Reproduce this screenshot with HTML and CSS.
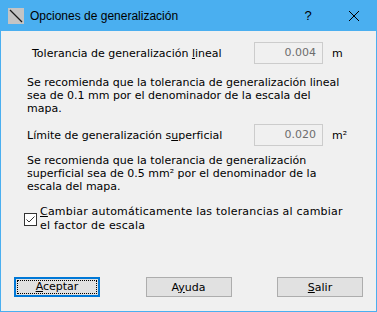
FILE: index.html
```html
<!DOCTYPE html>
<html lang="es">
<head>
    <meta charset="UTF-8">
    <title>Opciones de generalización</title>
    <link rel="stylesheet" href="styles.css">
</head>
<body>

    <div class="window">
        <!-- Title bar -->
        <div class="titlebar">
            <svg class="app-icon" width="16" height="16" viewBox="0 0 16 16">
                <rect x="0" y="0" width="16" height="16" fill="#c4c4c4"/>
                <line x1="2" y1="2" x2="14" y2="14" stroke="#1a1a1a" stroke-width="1.2"/>
            </svg>
            <span class="title">Opciones de generalización</span>
            <div class="caption-btn">?</div>
            <div class="caption-btn">
                <svg width="10" height="10" viewBox="0 0 10 10">
                    <path d="M0 0 L10 10 M10 0 L0 10" stroke="#000" stroke-width="1"/>
                </svg>
            </div>
        </div>

        <div class="client">
            <div class="field-row first">
                <label class="field-label indent">Tolerancia de generalización <u>l</u>ineal</label>
                <div class="textbox">0.004</div>
                <span class="unit">m</span>
            </div>
            <p class="note">Se recomienda que la tolerancia de generalización lineal<br>sea de 0.1 mm por el denominador de la escala del<br>mapa.</p>

            <div class="field-row second">
                <label class="field-label">Límite de generalización s<u>u</u>perficial</label>
                <div class="textbox">0.020</div>
                <span class="unit">m²</span>
            </div>
            <p class="note">Se recomienda que la tolerancia de generalización<br>superficial sea de 0.5 mm² por el denominador de la<br>escala del mapa.</p>

            <div class="check-row">
                <span class="checkbox">
                    <svg width="11" height="11" viewBox="0 0 11 11">
                        <path d="M1.5 5.5 L4 8 L9.5 2.5" fill="none" stroke="#333" stroke-width="1"/>
                    </svg>
                </span>
                <span class="check-text"><u>C</u>ambiar automáticamente las tolerancias al cambiar<br>el factor de escala</span>
            </div>

            <div class="buttons">
                <button class="btn default"><span class="focus"><u>A</u>ceptar</span></button>
                <button class="btn">A<u>y</u>uda</button>
                <button class="btn"><u>S</u>alir</button>
            </div>
        </div>
    </div>

</body>
</html>
```

FILE: styles.css
```css
body {
    margin: 0;
    font-family: "DejaVu Sans", Verdana, sans-serif;
    font-size: 11px;
    color: #000;
}
.window {
    width: 377px;
    height: 312px;
    box-sizing: border-box;
    border: 1px solid #4aaff0;
    border-top: none;
    display: flex;
    flex-direction: column;
    background: #f0f0f0;
}
.titlebar {
    height: 31px;
    margin: 0 -1px;
    background: #4aaff0;
    display: flex;
    align-items: center;
}
.app-icon {
    margin-left: 8px;
    margin-right: 6px;
}
.title {
    flex: 1;
    font-family: "Liberation Sans", Arial, sans-serif;
    font-size: 12px;
}
.caption-btn {
    width: 46px;
    height: 31px;
    display: flex;
    align-items: center;
    justify-content: center;
    font-family: "Liberation Sans", Arial, sans-serif;
    font-size: 13px;
}
.client {
    flex: 1;
    display: flex;
    flex-direction: column;
    padding: 0 13px 14px 26px;
}
.field-row {
    display: flex;
    align-items: center;
    height: 22px;
}
.field-row.first {
    margin-top: 11px;
}
.field-row.second {
    margin-top: 9px;
}
.field-label {
    width: 227px;
}
.field-label.indent {
    padding-left: 5px;
    box-sizing: border-box;
}
.textbox {
    width: 69px;
    height: 22px;
    box-sizing: border-box;
    border: 1px solid #cccccc;
    color: #6d6d6d;
    text-align: right;
    line-height: 20px;
    padding-right: 6px;
}
.unit {
    margin-left: 9px;
}
.note {
    margin: 12px 0 0;
    line-height: 13px;
}
.field-row.second + .note {
    margin-top: 8px;
}
.check-row {
    display: flex;
    align-items: center;
    margin-top: 12px;
    margin-left: -3px;
}
.checkbox {
    width: 13px;
    height: 13px;
    box-sizing: border-box;
    border: 1px solid #333;
    background: #fff;
    display: flex;
    align-items: center;
    justify-content: center;
    margin-right: 3px;
}
.check-text {
    line-height: 14px;
    letter-spacing: 0.2px;
}
.buttons {
    margin-top: auto;
    margin-left: -13px;
    display: flex;
    justify-content: space-between;
}
.btn {
    width: 86px;
    height: 20px;
    padding: 0;
    background: #e1e1e1;
    border: 1px solid #adadad;
    font-family: "DejaVu Sans", Verdana, sans-serif;
    font-size: 11px;
    color: #000;
}
.btn.default {
    border: 2px solid #0078d7;
    padding: 1px;
}
.btn .focus {
    display: block;
    height: 100%;
    box-sizing: border-box;
    border: 1px dotted #000;
    line-height: 12px;
}
```
